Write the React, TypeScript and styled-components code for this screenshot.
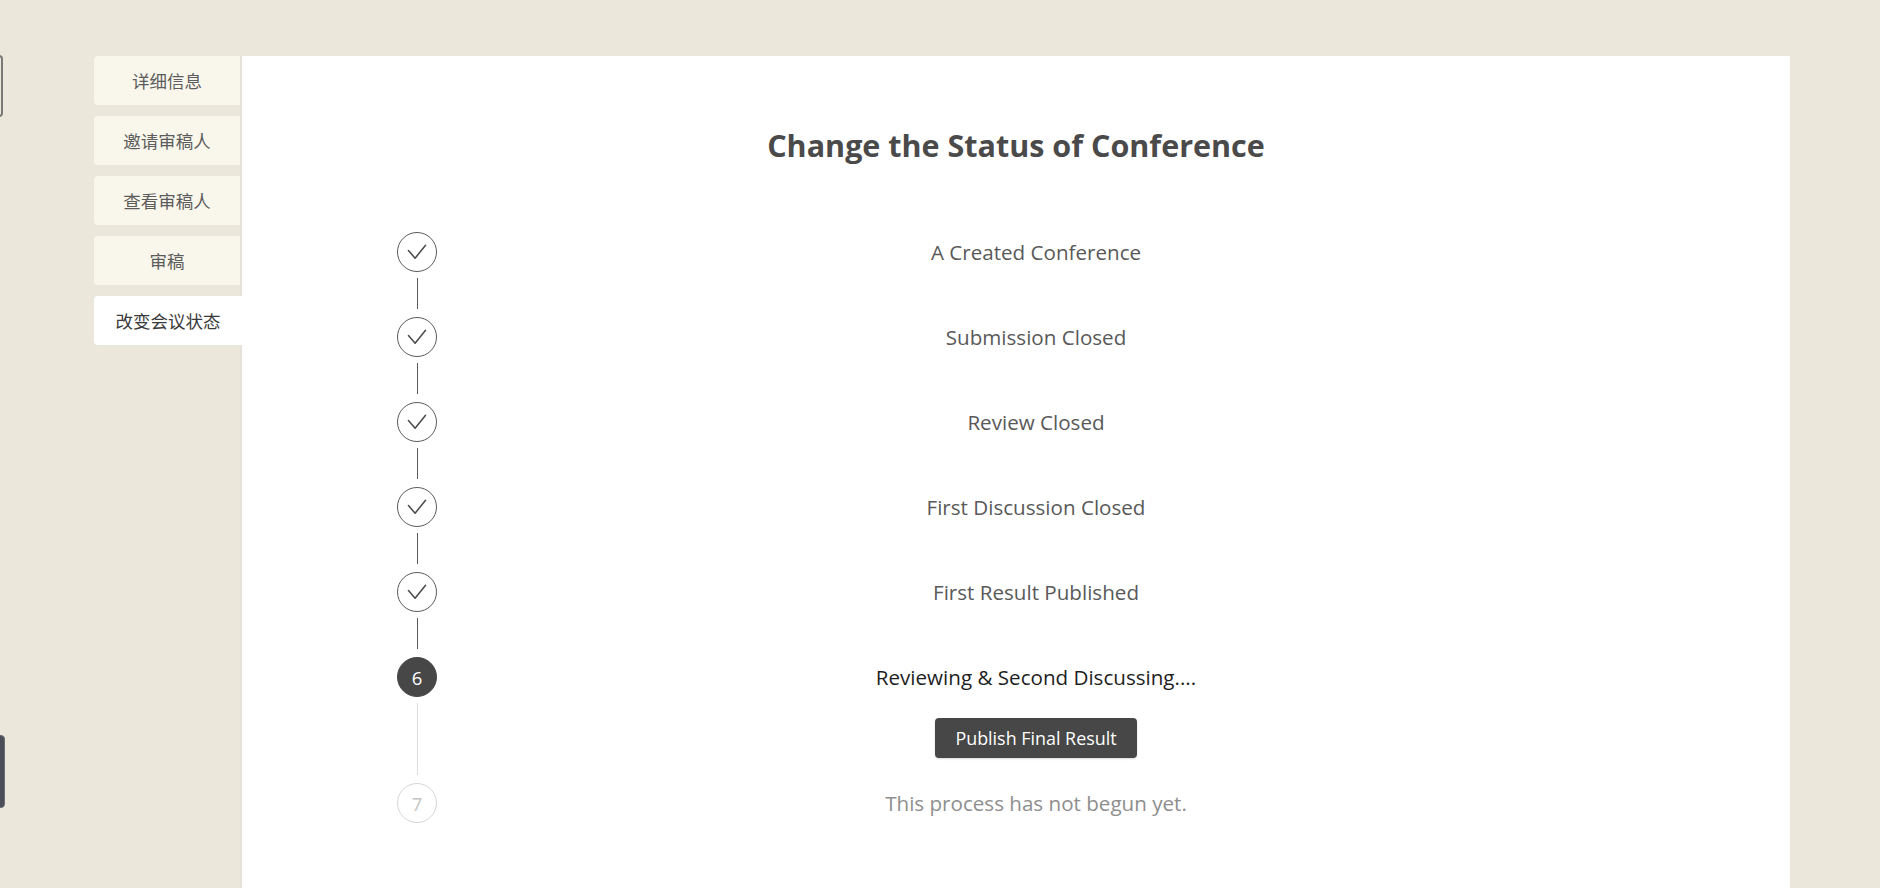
import React from "react";
import styled, { createGlobalStyle, css } from "styled-components";

const Global = createGlobalStyle`
  html, body { margin: 0; padding: 0; }
  body {
    background: #ebe7da;
    font-family: "Open Sans", "Noto Sans CJK SC", sans-serif;
    overflow: hidden;
  }
`;

const Page = styled.div`
  display: flex;
  align-items: flex-start;
  padding: 56px 90px 0 94px;
  min-height: 888px;
  box-sizing: border-box;
`;

const Nav = styled.nav`
  display: flex;
  flex-direction: column;
  gap: 11px;
  width: 148px;
  flex: none;
  align-self: stretch;
  box-sizing: border-box;
  border-right: 2px solid #e4e2da;
`;

const Tab = styled.div<{ $active?: boolean }>`
  height: 49px;
  display: flex;
  align-items: center;
  justify-content: center;
  border-radius: 4px 0 0 4px;
  font-family: "Noto Sans CJK SC", sans-serif;
  font-size: 17.5px;
  color: #5c5c5c;
  background: #f9f6eb;
  cursor: pointer;
  ${(p) =>
    p.$active &&
    css`
      background: #ffffff;
      color: #3a3a3a;
      margin-right: -2px;
    `}
`;

const Panel = styled.main`
  flex: 1;
  background: #ffffff;
  min-height: 832px;
  padding-top: 67px;
  box-sizing: border-box;
`;

const Title = styled.h2`
  margin: 0;
  text-align: center;
  font-family: "Open Sans", sans-serif;
  font-weight: 700;
  font-size: 30.5px;
  line-height: 44px;
  color: #4a4a4a;
`;

const Steps = styled.div`
  width: 1238px;
  margin: 65px auto 0;
  display: flex;
  flex-direction: column;
`;

const Step = styled.div<{ $last?: boolean }>`
  display: flex;
  min-height: ${(p) => (p.$last ? "40px" : "85px")};
`;

const IconCol = styled.div`
  width: 40px;
  flex: none;
  display: flex;
  flex-direction: column;
  align-items: center;
`;

type Status = "finish" | "process" | "wait";

const Circle = styled.div<{ $status: Status }>`
  width: 40px;
  height: 40px;
  box-sizing: border-box;
  border-radius: 50%;
  display: flex;
  align-items: center;
  justify-content: center;
  font-size: 18.5px;
  flex: none;
  ${(p) =>
    p.$status === "finish" &&
    css`
      border: 1px solid #5a5a5a;
      color: #4a4a4a;
    `}
  ${(p) =>
    p.$status === "process" &&
    css`
      background: #474747;
      border: 1px solid #474747;
      color: #ffffff;
    `}
  ${(p) =>
    p.$status === "wait" &&
    css`
      border: 1px solid #d6d6d6;
      color: #c4c4c4;
    `}
`;

const Line = styled.div<{ $light?: boolean }>`
  flex: 1;
  width: 1px;
  margin: 6px 0 8px;
  background: ${(p) => (p.$light ? "#dedede" : "#5a5a5a")};
`;

const Content = styled.div`
  flex: 1;
  display: flex;
  flex-direction: column;
  align-items: center;
  padding-bottom: 25px;
`;

const Label = styled.div<{ $status: Status }>`
  height: 40px;
  line-height: 40px;
  font-size: 20.6px;
  color: ${(p) =>
    p.$status === "process" ? "#1e1e1e" : p.$status === "wait" ? "#8e8e8e" : "#595959"};
`;

const Button = styled.button`
  margin-top: 21px;
  height: 40px;
  width: 202px;
  padding: 0;
  border: none;
  border-radius: 4px;
  background: #474747;
  color: #ffffff;
  font-family: "Open Sans", sans-serif;
  font-size: 17.9px;
  cursor: pointer;
  box-shadow: 0 1px 2px rgba(0, 0, 0, 0.15);
`;

const EdgeTop = styled.div`
  position: fixed;
  left: -40px;
  top: 55px;
  width: 43px;
  height: 62px;
  box-sizing: border-box;
  border: 2px solid #7a7a78;
  border-radius: 4px;
`;

const EdgeBottom = styled.div`
  position: fixed;
  left: -40px;
  top: 735px;
  width: 45px;
  height: 73px;
  box-sizing: border-box;
  background: #4b4e57;
  border: 1px solid #6b6e76;
  border-radius: 4px;
`;

const Check = () => (
  <svg width="40" height="40" viewBox="0 0 40 40">
    <polyline
      points="11,18.5 18,26.5 29,13"
      fill="none"
      stroke="#4a4a4a"
      strokeWidth="1.6"
      strokeLinecap="round"
      strokeLinejoin="round"
    />
  </svg>
);

const tabs = ["详细信息", "邀请审稿人", "查看审稿人", "审稿", "改变会议状态"];

const steps: { label: string; status: Status }[] = [
  { label: "A Created Conference", status: "finish" },
  { label: "Submission Closed", status: "finish" },
  { label: "Review Closed", status: "finish" },
  { label: "First Discussion Closed", status: "finish" },
  { label: "First Result Published", status: "finish" },
  { label: "Reviewing & Second Discussing....", status: "process" },
  { label: "This process has not begun yet.", status: "wait" },
];

export default function App() {
  return (
    <>
      <Global />
      <EdgeTop />
      <EdgeBottom />
      <Page>
        <Nav>
          {tabs.map((t, i) => (
            <Tab key={t} $active={i === tabs.length - 1}>
              {t}
            </Tab>
          ))}
        </Nav>
        <Panel>
          <Title>Change the Status of Conference</Title>
          <Steps>
            {steps.map((s, i) => {
              const last = i === steps.length - 1;
              return (
                <Step key={s.label} $last={last}>
                  <IconCol>
                    <Circle $status={s.status}>
                      {s.status === "finish" ? <Check /> : i + 1}
                    </Circle>
                    {!last && <Line $light={s.status !== "finish"} />}
                  </IconCol>
                  <Content>
                    <Label $status={s.status}>{s.label}</Label>
                    {s.status === "process" && <Button>Publish Final Result</Button>}
                  </Content>
                </Step>
              );
            })}
          </Steps>
        </Panel>
      </Page>
    </>
  );
}
